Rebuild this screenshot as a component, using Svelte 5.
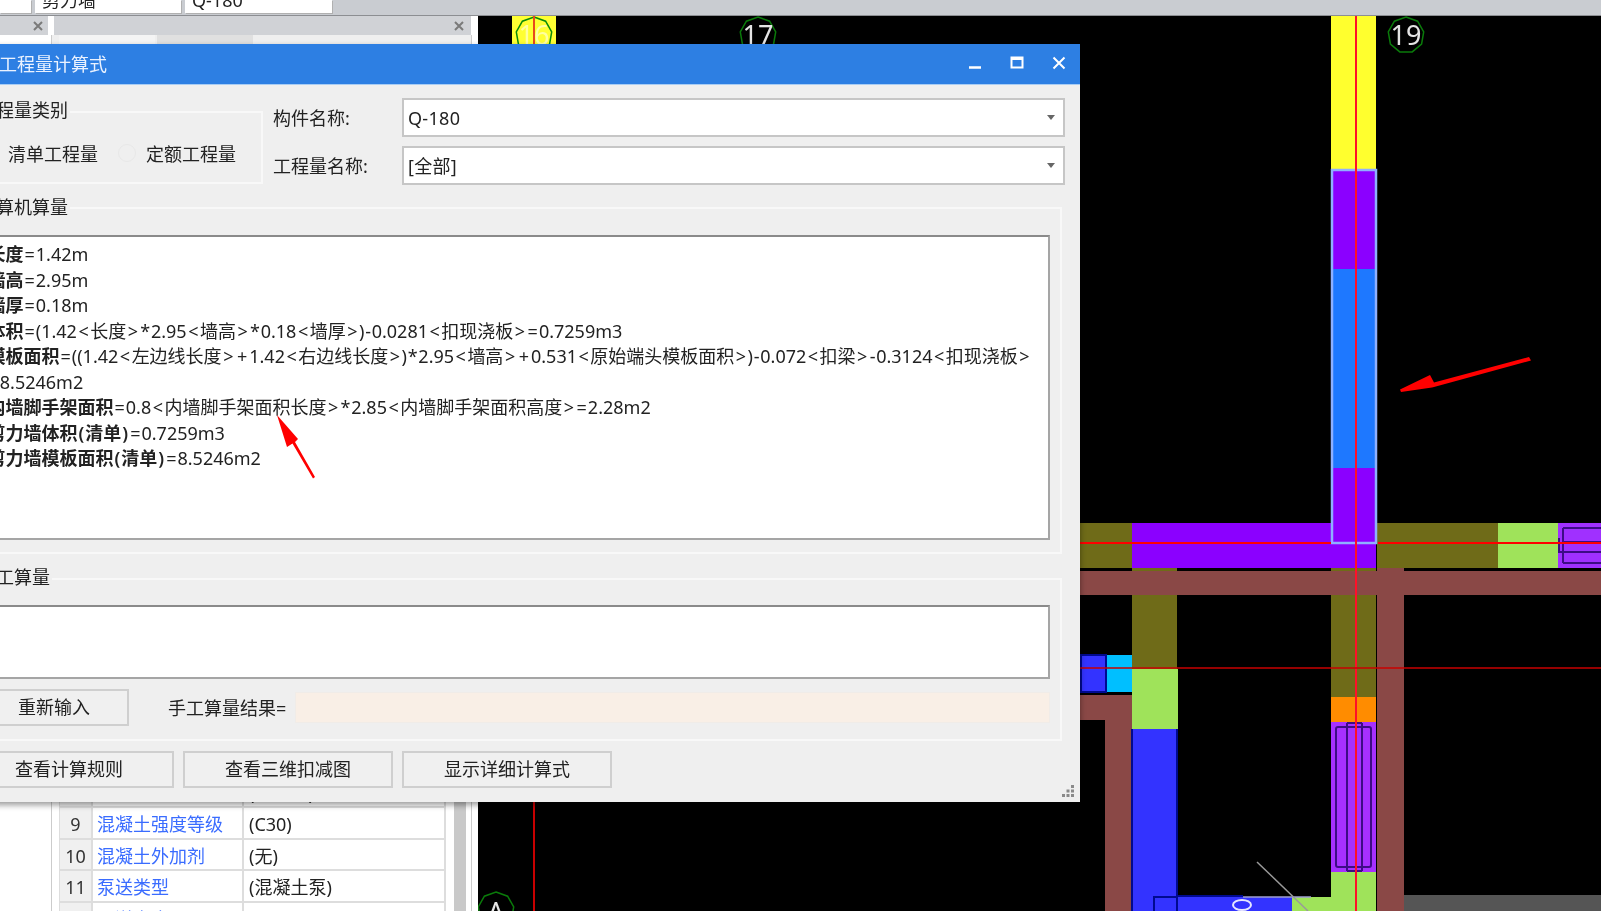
<script>
  const lines = [
    { b: '长度', r: '=1.42m' },
    { b: '墙高', r: '=2.95m' },
    { b: '墙厚', r: '=0.18m' },
    { b: '体积', r: '=(1.42<长度>*2.95<墙高>*0.18<墙厚>)-0.0281<扣现浇板>=0.7259m3' },
    { b: '模板面积', r: '=((1.42<左边线长度>+1.42<右边线长度>)*2.95<墙高>+0.531<原始端头模板面积>)-0.072<扣梁>-0.3124<扣现浇板>' },
    { b: '', r: '=8.5246m2' },
    { b: '内墙脚手架面积', r: '=0.8<内墙脚手架面积长度>*2.85<内墙脚手架面积高度>=2.28m2' },
    { b: '剪力墙体积(清单)', r: '=0.7259m3' },
    { b: '剪力墙模板面积(清单)', r: '=8.5246m2' }
  ];
  const opClass = { '=': 'eq', '<': 'lg', '>': 'lg', '+': 'plus', '*': 'star', '-': 'minus', '(': 'par', ')': 'par' };
  const tokens = (s) => s.split(/([=<>+*\-()])/).filter(Boolean);
  const rows = [
    { n: 8, k: '混凝土类型', v: '(泵送砼)' },
    { n: 9, k: '混凝土强度等级', v: '(C30)' },
    { n: 10, k: '混凝土外加剂', v: '(无)' },
    { n: 11, k: '泵送类型', v: '(混凝土泵)' },
    { n: 12, k: '泵送高度(m)', v: '' }
  ];
  function nonagon(cx, cy, r) {
    const p = [];
    for (let i = 0; i < 9; i++) {
      const a = -Math.PI / 2 + (i * 2 * Math.PI) / 9;
      p.push((cx + r * Math.cos(a)).toFixed(1) + ',' + (cy + r * Math.sin(a)).toFixed(1));
    }
    return p.join(' ');
  }
</script>

<div class="page">
  <div class="topbar">
    <div class="cell c0"></div>
    <div class="cell c1"><span>剪力墙</span></div>
    <div class="cell c2"><span>Q-180</span></div>
  </div>

  <div class="panel">
    <div class="heads">
      <div class="head h1">
        <svg width="10" height="10" viewBox="0 0 10 10"><path d="M1 1l8 8M9 1l-8 8" stroke="#7a7a7a" stroke-width="2"/></svg>
      </div>
      <div class="head h2">
        <svg width="10" height="10" viewBox="0 0 10 10"><path d="M1 1l8 8M9 1l-8 8" stroke="#7a7a7a" stroke-width="2"/></svg>
      </div>
    </div>
    <div class="body">
      <div class="tabs">
        <div class="tab on">属性列表</div>
        <div class="tab">图层管理</div>
      </div>
      <div class="props">
        <div class="table">
          {#each rows as row}
            <div class="num">{row.n}</div>
            <div class="key">{row.k}</div>
            <div class="val">{row.v}</div>
          {/each}
        </div>
        <div class="scroll"></div>
      </div>
    </div>
  </div>

  <svg class="canvas" width="1123" height="895" viewBox="478 16 1123 895">
    <rect x="478" y="16" width="1123" height="895" fill="#000" />
    <rect x="512" y="16" width="44" height="40" fill="#ffff33" />
    <polygon points={nonagon(534, 35, 18)} fill="none" stroke="#0a8a0a" stroke-width="1.5" />
    <text x="534" y="45" class="bub y" text-anchor="middle">16</text>
    <line x1="534" y1="16" x2="534" y2="60" stroke="#e8481c" stroke-width="2" />
    <line x1="534" y1="790" x2="534" y2="911" stroke="#c80000" stroke-width="2" />
    <polygon points={nonagon(758, 35, 18)} fill="none" stroke="#0a7a0a" stroke-width="1.5" />
    <text x="758" y="45" class="bub" text-anchor="middle">17</text>
    <polygon points={nonagon(1406, 35, 18)} fill="none" stroke="#0a7a0a" stroke-width="1.5" />
    <text x="1406" y="45" class="bub" text-anchor="middle">19</text>
    <polygon points={nonagon(496, 910, 18)} fill="none" stroke="#0a7a0a" stroke-width="1.5" />
    <text x="496" y="922" class="bub" text-anchor="middle">A</text>

    <!-- walls -->
    <rect x="1331" y="16" width="45" height="153" fill="#ffff2e" />
    <rect x="1080" y="523" width="52" height="45" fill="#6f6b18" />
    <rect x="1132" y="523" width="244" height="45" fill="#8b00ff" />
    <rect x="1377" y="523" width="121" height="45" fill="#6f6b18" />
    <rect x="1498" y="523" width="60" height="45" fill="#9fe35a" />
    <rect x="1558" y="523" width="43" height="45" fill="#a030ff" />
    <path d="M1563 528h40M1563 563h40M1563 528v35M1563 542h40M1563 552h40M1559 538v14h4" fill="none" stroke="#3d0c86" stroke-width="2" />

    <rect x="1132" y="568" width="45" height="101" fill="#6f6b18" />
    <rect x="1331" y="568" width="45" height="129" fill="#6f6b18" />
    <rect x="1331" y="697" width="45" height="25" fill="#ff8c00" />
    <rect x="1331" y="722" width="45" height="150" fill="#a630ff" />
    <rect x="1336" y="727" width="35" height="140" rx="2" fill="none" stroke="#3d0c86" stroke-width="2" />
    <path d="M1347 723v148M1362 723v148M1347 723h15M1347 871h15" fill="none" stroke="#3d0c86" stroke-width="2" />
    <rect x="1331" y="872" width="45" height="39" fill="#9fe35a" />
    <rect x="1292" y="897" width="39" height="14" fill="#9fe35a" />

    <rect x="1080" y="571" width="521" height="24" fill="#8a4846" />
    <rect x="1377" y="568" width="27" height="343" fill="#8a4846" />
    <rect x="1080" y="695" width="52" height="25" fill="#8a4846" />
    <rect x="1105" y="695" width="27" height="216" fill="#8a4846" />

    <rect x="1081" y="655" width="25" height="37" fill="#3333ff" stroke="#000a90" stroke-width="2" />
    <rect x="1107" y="655" width="25" height="37" fill="#00bfff" />
    <rect x="1132" y="729" width="46" height="182" fill="#3333ff" />
    <path d="M1177 729v182M1132 729v182" stroke="#000a90" stroke-width="2" />
    <rect x="1132" y="669" width="46" height="60" fill="#9fe35a" />
    <rect x="1177" y="897" width="115" height="14" fill="#3333ff" />
    <path d="M1154 911v-14h23v14" fill="none" stroke="#000a90" stroke-width="2" />
    <path d="M1177 896h66" stroke="#000a90" stroke-width="2" />
    <rect x="1404" y="895" width="197" height="16" fill="#555" />
    <path d="M1243 897h68" stroke="#9f9fd0" stroke-width="1.5" />
    <path d="M1257 862L1308 911" stroke="#9a9a9a" stroke-width="1.5" />
    <ellipse cx="1242" cy="905" rx="9" ry="5" fill="none" stroke="#e6e6ff" stroke-width="2" />

    <!-- selected wall -->
    <rect x="1332" y="170" width="44" height="372" fill="#8b00ff" />
    <rect x="1332" y="269" width="44" height="199" fill="#1e78ff" />
    <rect x="1332" y="170" width="44" height="373" fill="none" stroke="#8fb0ff" stroke-width="2.5" />

    <!-- axes -->
    <path d="M1356 16V911" stroke="#ff1028" stroke-width="2" />
    <path d="M1080 543H1331M1378 543H1601" stroke="#ff0000" stroke-width="2" />
    <path d="M1080 668H1601" stroke="#c80000" stroke-width="1.5" />
  </svg>

  <div class="dialog">
    <div class="title">
      <span>工程量计算式</span>
      <div class="ctrls">
        <svg width="14" height="14" viewBox="0 0 14 14"><path d="M1 11.5h12" stroke="#fff" stroke-width="2.5"/></svg>
        <svg width="14" height="14" viewBox="0 0 14 14"><path d="M1.5 1.5h11v10h-11zM1.5 3h11" fill="none" stroke="#fff" stroke-width="2"/></svg>
        <svg width="14" height="14" viewBox="0 0 14 14"><path d="M1.5 1.5l11 11M12.5 1.5l-11 11" stroke="#fff" stroke-width="2"/></svg>
      </div>
    </div>

    <div class="content">
      <div class="row1">
        <div class="group g1">
          <div class="legend up">工程量类别</div>
          <div class="radios">
            <span class="radio"></span><span class="rlabel">清单工程量</span>
            <span class="radio"></span><span class="rlabel">定额工程量</span>
          </div>
        </div>
        <div class="form">
          <div class="flabel">构件名称:</div>
          <div class="select">Q-180<i></i></div>
          <div class="flabel">工程量名称:</div>
          <div class="select">[全部]<i></i></div>
        </div>
      </div>

      <div class="group g2">
        <div class="legend">计算机算量</div>
        <div class="box calc">
          {#each lines as l}
            <div class="line"><b>{#each tokens(l.b) as t}{#if t === '(' || t === ')'}<span class="bp">{t}</span>{:else}{t}{/if}{/each}</b>{#each tokens(l.r) as t}{#if opClass[t]}<span class={opClass[t]}>{t}</span>{:else}{t}{/if}{/each}</div>
          {/each}
        </div>
      </div>

      <div class="group g3">
        <div class="legend up">手工算量</div>
        <div class="box manual"></div>
        <div class="manual-row">
          <div class="btn reset">重新输入</div>
          <div class="result-label">手工算量结果=</div>
          <div class="result"></div>
        </div>
      </div>

      <div class="buttons">
        <div class="btn wide">查看计算规则</div>
        <div class="btn wide">查看三维扣减图</div>
        <div class="btn wide">显示详细计算式</div>
      </div>
    </div>

    <svg class="grip" width="14" height="14" viewBox="0 0 14 14" fill="#8a8a8a">
      <rect x="10" y="1" width="3" height="3"/><rect x="5.5" y="5.5" width="3" height="3"/><rect x="10" y="5.5" width="3" height="3"/>
      <rect x="1" y="10" width="3" height="3"/><rect x="5.5" y="10" width="3" height="3"/><rect x="10" y="10" width="3" height="3"/>
    </svg>
  </div>

  <svg class="arrows" width="1601" height="911" viewBox="0 0 1601 911">
    <polygon points="277,415 298,439 295,442 315,477 313,478.5 292.5,443.5 287,447" fill="#ff0000" />
    <polygon points="1400,389.5 1430,375 1434,382.5 1529,357 1531,360.5 1434,387 1432,387.5 1401,392" fill="#ff0000" />
  </svg>
</div>

<style>
  :global(body) {
    margin: 0;
    background: #fff;
  }
  .page {
    position: relative;
    width: 1601px;
    height: 911px;
    overflow: hidden;
    background: #fff;
    font-family: "Noto Sans", "Noto Sans CJK SC", sans-serif;
    font-size: 18px;
    color: #222;
    filter: blur(0.45px);
  }
  .topbar {
    display: flex;
    height: 15px;
    background: #c9ccd1;
    border-bottom: 1px solid #8c8e92;
    box-sizing: content-box;
  }
  .cell {
    height: 13px;
    background: #fff;
    display: flex;
    align-items: flex-end;
    overflow: hidden;
    margin-right: 4px;
    line-height: 1;
    box-shadow: 1px 1px 0 #b0b0b0;
  }
  .cell span {
    margin-bottom: -2px;
    margin-left: 7px;
    white-space: nowrap;
    position: relative;
    top: -6px;
  }
  .c0 { width: 31px; }
  .c1 { width: 146px; }
  .c2 { width: 147px; }

  .panel {
    position: absolute;
    left: 0;
    top: 16px;
    width: 478px;
    bottom: 0;
  }
  .heads {
    display: flex;
    gap: 6px;
    height: 19px;
  }
  .head {
    background: #d0d2d6;
    display: flex;
    justify-content: flex-end;
    align-items: center;
  }
  .h1 { width: 48px; padding-right: 5px; box-sizing: border-box; }
  .h2 { width: 417px; padding-right: 7px; box-sizing: border-box; }
  .body {
    margin-left: 51px;
    width: 421px;
    height: 876px;
    border-left: 1px solid #ccc;
    border-right: 1px solid #ccc;
    box-sizing: border-box;
    background: #fff;
  }
  .tabs {
    display: flex;
    gap: 2px;
    padding-left: 7px;
    height: 40px;
    background: #efefef;
  }
  .tab {
    width: 96px;
    height: 40px;
    text-align: center;
    background: #e0e0e0;
    line-height: 36px;
    color: #666;
  }
  .tab.on { background: #f4f4f4; }
  .props {
    display: flex;
    margin-top: 701.5px;
    padding-left: 7px;
  }
  .table {
    display: grid;
    grid-template-columns: 33px 151px 202px;
    grid-auto-rows: 31.5px;
    flex: none;
    border-left: 1px solid #ddd;
  }
  .num, .key, .val {
    box-sizing: border-box;
    border-right: 2px solid #ddd;
    border-bottom: 2px solid #ddd;
    line-height: 33px;
    white-space: nowrap;
    overflow: hidden;
  }
  .num {
    background: #f0f0f0;
    text-align: center;
    color: #333;
  }
  .key {
    color: #3a6cff;
    padding-left: 4px;
  }
  .val {
    padding-left: 5px;
  }
  .scroll {
    width: 12px;
    height: 150px;
    margin-left: 8px;
    background: #c9c9c9;
  }

  .canvas {
    position: absolute;
    left: 478px;
    top: 16px;
  }
  .bub {
    font-family: "Noto Sans", sans-serif;
    font-size: 27px;
    fill: #e4e4e4;
  }
  .bub.y { fill: #ffffa0; }

  .dialog {
    position: absolute;
    left: -40px;
    top: 44px;
    width: 1120px;
    height: 758px;
    background: #efefef;
    box-shadow: 0 3px 6px rgba(0, 0, 0, 0.4);
    display: flex;
    flex-direction: column;
  }
  .title {
    flex: none;
    height: 41px;
    box-sizing: border-box;
    background: #2d7fe3;
    color: #eaf2ff;
    display: flex;
    align-items: center;
    justify-content: space-between;
    padding-left: 39px;
    padding-right: 14px;
    padding-bottom: 3px;
    border-bottom: 1px solid #a9cdf4;
  }
  .ctrls {
    display: flex;
    gap: 28px;
    padding-top: 1px;
  }
  .content {
    flex: 1;
    padding-left: 10px;
    display: flex;
    flex-direction: column;
  }
  .row1 {
    display: flex;
    height: 100px;
    padding-top: 13px;
    box-sizing: border-box;
  }
  .group {
    position: relative;
    box-sizing: border-box;
    border: 2px solid #f8f8f8;
  }
  .legend {
    position: absolute;
    left: 6px;
    top: -14px;
    background: #efefef;
    line-height: 24px;
    padding-right: 2px;
    white-space: nowrap;
  }
  .legend.up { top: -15px; }
  .g1 {
    width: 293px;
    height: 73px;
    margin-top: 13px;
    flex: none;
  }
  .radios {
    display: flex;
    align-items: center;
    height: 100%;
    padding-top: 10px;
    padding-left: 8px;
    box-sizing: border-box;
  }
  .radio {
    box-sizing: border-box;
    width: 18px;
    height: 18px;
    border-radius: 50%;
    border: 1px solid #e8e8e8;
    flex: none;
    margin-right: 10px;
  }
  .rlabel {
    margin-right: 20px;
    white-space: nowrap;
  }
  .form {
    display: grid;
    grid-template-columns: 130px 663px;
    grid-auto-rows: 39px;
    row-gap: 9px;
    margin-left: 9px;
    align-items: center;
  }
  .select {
    position: relative;
    box-sizing: border-box;
    height: 39px;
    line-height: 36px;
    border: 2px solid #c6c6c6;
    background: #fff;
    padding-left: 4px;
    letter-spacing: 0.3px;
  }
  .select i {
    position: absolute;
    right: 8px;
    top: 15px;
    border-left: 4px solid transparent;
    border-right: 4px solid transparent;
    border-top: 5px solid #666;
  }
  .flabel {
    white-space: nowrap;
    padding-bottom: 1px;
    padding-left: 1px;
  }
  .g2 {
    margin-top: 22px;
    width: 1092px;
    height: 347px;
    padding: 26px 10px 0 0;
  }
  .box {
    box-sizing: border-box;
    background: #fff;
    border: 2px solid #8a8a8a;
    border-right-color: #a5a5a5;
    border-bottom-color: #a5a5a5;
  }
  .calc {
    height: 305px;
    padding: 5px 0 0 13.5px;
    line-height: 25.5px;
  }
  .line {
    white-space: nowrap;
  }
  .line b {
    font-weight: 600;
  }
  .bp { margin: 0 1px; }
  .eq { margin: 0 1px; }
  .lg { margin: 0 1.5px; }
  .plus { margin: 0 2px; }
  .star { margin: 0 0.75px; }
  .minus { margin: 0 0.75px; }
  .g3 {
    margin-top: 24px;
    width: 1092px;
    height: 163px;
    padding: 25px 10px 0 0;
  }
  .manual {
    height: 74px;
  }
  .manual-row {
    display: flex;
    align-items: center;
    margin-top: 10px;
  }
  .btn {
    box-sizing: border-box;
    border: 2px solid #cfcfcf;
    background: #f0f0f0;
    text-align: center;
    white-space: nowrap;
  }
  .reset {
    flex: none;
    width: 150px;
    height: 37px;
    line-height: 33px;
    margin-left: 7px;
  }
  .result-label {
    flex: none;
    width: 127px;
    margin-left: 39px;
    white-space: nowrap;
    padding-bottom: 1px;
  }
  .result {
    flex: 1;
    height: 31px;
    background: #f9efe6;
    border: 1px solid #f0ece8;
    box-sizing: border-box;
  }
  .buttons {
    display: flex;
    gap: 9px;
    margin-top: 10px;
    margin-left: -6px;
  }
  .wide {
    flex: none;
    width: 210px;
    height: 37px;
    line-height: 32px;
  }
  .grip {
    position: absolute;
    right: 5px;
    bottom: 4px;
  }
  .arrows {
    position: absolute;
    left: 0;
    top: 0;
    pointer-events: none;
  }
</style>
